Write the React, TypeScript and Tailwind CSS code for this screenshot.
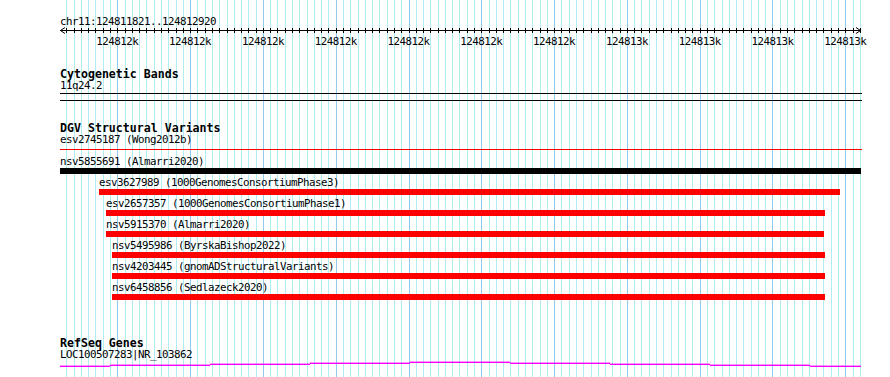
import React from "react";

const X0 = 117.3;
const B0 = 124811900;
const S = 0.728;
const toX = (b: number) => X0 + (b - B0) * S;

const gridBp = Array.from({ length: 110 }, (_, i) => 124811830 + i * 10);
const majorBp = Array.from({ length: 11 }, (_, i) => 124811900 + i * 100);
const label = (b: number) => `${Math.floor((b + 499) / 1000)}k`;

const features = [
  { name: "nsv5855691 (Almarri2020)", x1: 60, x2: 861, color: "bg-black" },
  { name: "esv3627989 (1000GenomesConsortiumPhase3)", x1: 99, x2: 840, color: "bg-[#ff0000]" },
  { name: "esv2657357 (1000GenomesConsortiumPhase1)", x1: 106, x2: 825, color: "bg-[#ff0000]" },
  { name: "nsv5915370 (Almarri2020)", x1: 106, x2: 824, color: "bg-[#ff0000]" },
  { name: "nsv5495986 (ByrskaBishop2022)", x1: 112, x2: 825, color: "bg-[#ff0000]" },
  { name: "nsv4203445 (gnomADStructuralVariants)", x1: 112, x2: 825, color: "bg-[#ff0000]" },
  { name: "nsv6458856 (Sedlazeck2020)", x1: 112, x2: 825, color: "bg-[#ff0000]" },
];

const geneSegs = [
  { a: 60, b: 110, y: 366.3 },
  { a: 110, b: 210, y: 365.3 },
  { a: 210, b: 310, y: 364.3 },
  { a: 310, b: 410, y: 363.3 },
  { a: 410, b: 510, y: 362.3 },
  { a: 510, b: 610, y: 363.3 },
  { a: 610, b: 710, y: 364.3 },
  { a: 710, b: 810, y: 365.3 },
  { a: 810, b: 861, y: 366.3 },
];

function Grid() {
  return (
    <svg className="absolute left-0 top-0" width={890} height={377}>
      {gridBp.map((b) => (
        <rect
          key={b}
          x={Math.round(toX(b))}
          y={0}
          width={1}
          height={377}
          fill={b % 100 === 0 ? "#8ecbee" : "#aeeef2"}
        />
      ))}
    </svg>
  );
}

function Ruler() {
  return (
    <svg width={802} height={20} className="block overflow-visible">
      <rect x={0} y={2} width={801} height={1} fill="#000" />
      {gridBp.map((b) => (
        <rect key={b} x={Math.round(toX(b)) - 60} y={0} width={1} height={5} fill="#000" />
      ))}
      <polyline points="5,-0.5 0.5,2.5 5,5.5" fill="none" stroke="#000" strokeWidth={1} />
      <polyline points="796,-0.5 800.5,2.5 796,5.5" fill="none" stroke="#000" strokeWidth={1} />
      {majorBp.map((b) => (
        <text
          key={b}
          x={toX(b) - 60}
          y={17}
          textAnchor="middle"
          fontSize={10.8}
          letterSpacing={-0.5}
          fontFamily="DejaVu Sans Mono, monospace"
          fill="#000"
        >
          {label(b)}
        </text>
      ))}
    </svg>
  );
}

export default function App() {
  return (
    <div className="relative w-[890px] h-[377px] bg-white overflow-hidden">
      <Grid />
      <div className="relative flex flex-col items-start pl-[60px] pt-[16px] w-[862px] font-['DejaVu_Sans_Mono',monospace] text-[10.8px] tracking-[-0.5px] leading-[12px] text-black whitespace-pre">
        <div>chr11:124811821..124812920</div>
        <Ruler />

        <div className="mt-[20px] font-bold text-[11.6px] tracking-normal leading-[12px]">Cytogenetic Bands</div>
        <div>11q24.2</div>
        <div className="mt-[1px] w-[802px] h-[8px] border-t border-b border-black" />

        <div className="mt-[21px] font-bold text-[11.6px] tracking-normal leading-[12px]">DGV Structural Variants</div>
        <div>esv2745187 (Wong2012b)</div>
        <div className="mt-[3px] w-[802px] h-[1px] bg-[#ff0000]" />

        <div className="mt-[6px] flex flex-col gap-[3px]">
          {features.map((f) => (
            <div key={f.name} className="flex flex-col" style={{ marginLeft: f.x1 - 60 }}>
              <div>{f.name}</div>
              <div className={`h-[6px] ${f.color}`} style={{ width: f.x2 - f.x1 }} />
            </div>
          ))}
        </div>

        <div className="mt-[37px] font-bold text-[11.6px] tracking-normal leading-[12px]">RefSeq Genes</div>
        <div>LOC100507283|NR_103862</div>
        <svg width={802} height={8} className="block">
          {geneSegs.map((s) => (
            <rect
              key={s.a}
              x={s.a - 60}
              y={s.y - 361 - 0.7}
              width={s.b - s.a}
              height={1.4}
              fill="#ff00ff"
            />
          ))}
        </svg>
      </div>
    </div>
  );
}
